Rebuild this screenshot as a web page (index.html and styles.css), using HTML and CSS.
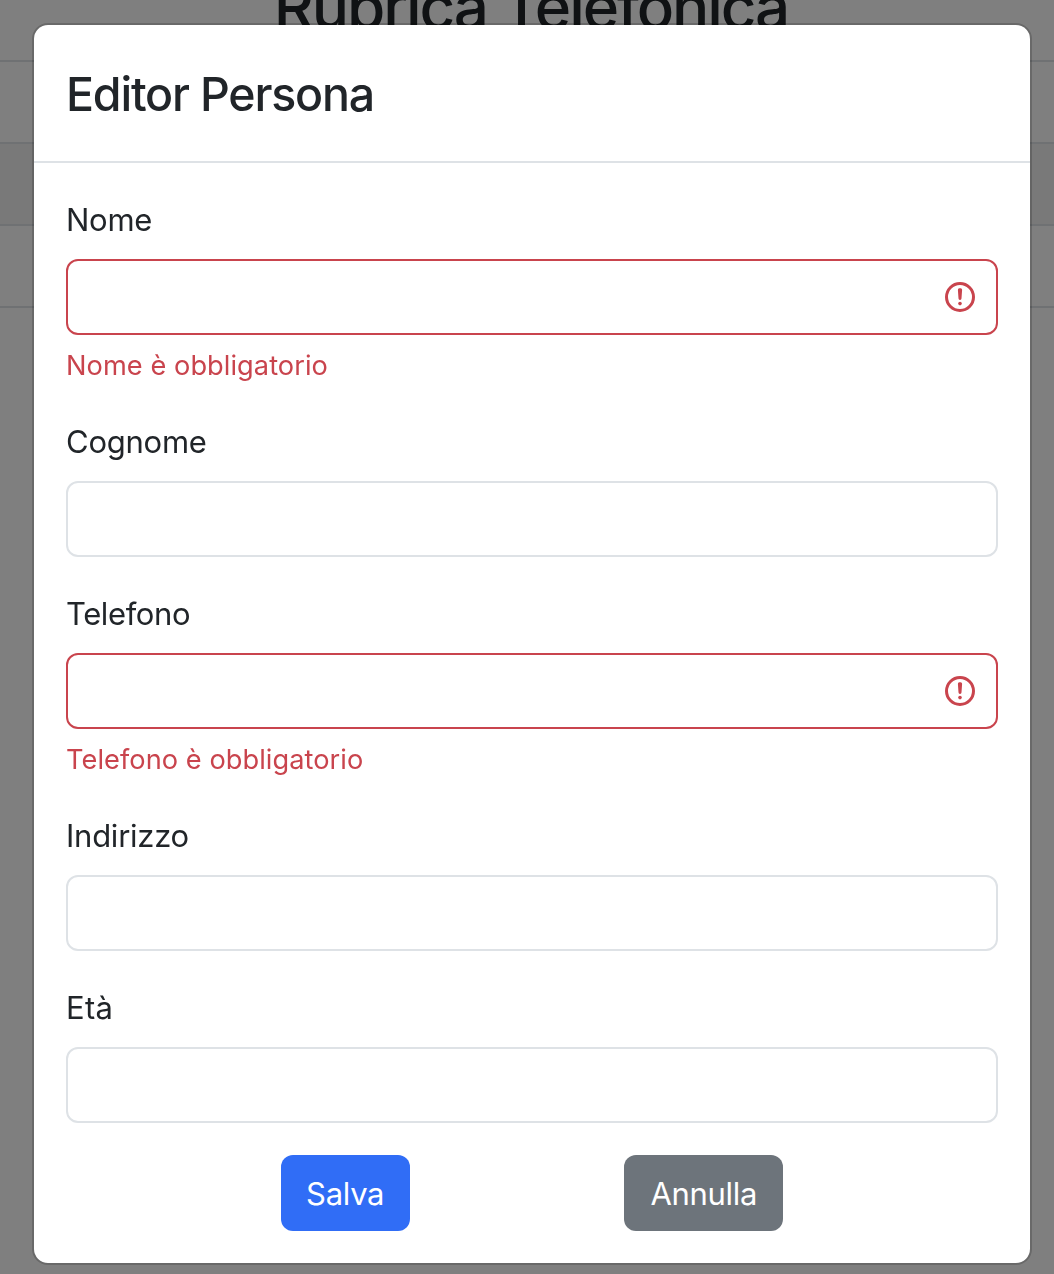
FILE: index.html
```html
<!DOCTYPE html>
<html lang="it">
<head>
<meta charset="utf-8">
<title>Rubrica Telefonica</title>
<link rel="stylesheet" href="styles.css">
</head>
<body>
<main class="page">
  <h1 class="page-title">Rubrica Telefonica</h1>
  <div class="table">
    <div class="table-row"></div>
    <div class="table-row table-row-striped"></div>
    <div class="table-row"></div>
  </div>
</main>
<div class="backdrop">
  <section class="modal" role="dialog" aria-labelledby="modal-title">
    <header class="modal-header">
      <h2 class="modal-title" id="modal-title">Editor Persona</h2>
    </header>
    <form class="modal-body">
      <div class="field">
        <label class="label" for="nome">Nome</label>
        <div class="control control-invalid">
          <input class="input" id="nome" type="text">
          <svg class="icon" viewBox="0 0 12 12" fill="none" stroke="currentColor"><circle cx="6" cy="6" r="4.5"/><path stroke-linejoin="round" d="M5.8 3.6h.4L6 6.5z"/><circle cx="6" cy="8.2" r=".6" fill="currentColor" stroke="none"/></svg>
        </div>
        <div class="feedback">Nome è obbligatorio</div>
      </div>
      <div class="field">
        <label class="label" for="cognome">Cognome</label>
        <div class="control"><input class="input" id="cognome" type="text"></div>
      </div>
      <div class="field">
        <label class="label label-tight" for="telefono">Telefono</label>
        <div class="control control-invalid">
          <input class="input" id="telefono" type="text">
          <svg class="icon" viewBox="0 0 12 12" fill="none" stroke="currentColor"><circle cx="6" cy="6" r="4.5"/><path stroke-linejoin="round" d="M5.8 3.6h.4L6 6.5z"/><circle cx="6" cy="8.2" r=".6" fill="currentColor" stroke="none"/></svg>
        </div>
        <div class="feedback">Telefono è obbligatorio</div>
      </div>
      <div class="field">
        <label class="label" for="indirizzo">Indirizzo</label>
        <div class="control"><input class="input" id="indirizzo" type="text"></div>
      </div>
      <div class="field">
        <label class="label label-wide" for="eta">Età</label>
        <div class="control"><input class="input" id="eta" type="text"></div>
      </div>
      <div class="actions">
        <button class="button button-primary" type="button">Salva</button>
        <button class="button button-secondary" type="button">Annulla</button>
      </div>
    </form>
  </section>
</div>
</body>
</html>
```

FILE: styles.css
```css
* {
  box-sizing: border-box;
}

body {
  margin: 0;
  height: 1274px;
  overflow: hidden;
  font-family: Inter, "Liberation Sans", sans-serif;
  font-size: 31px;
  line-height: 1.5;
  color: #212529;
  background: #fff;
}

.page {
  display: flow-root;
}

.page-title {
  margin: -32px 0 15px;
  padding-left: 8px;
  font-size: 62px;
  font-weight: 500;
  line-height: 77px;
  letter-spacing: -2.1px;
  text-align: center;
}

.table {
  border-top: 2px solid #dee2e6;
}

.table-row {
  height: 82px;
  border-bottom: 2px solid #dee2e6;
}

.table-row-striped {
  background: #f2f2f2;
}

.backdrop {
  position: fixed;
  inset: 0;
  padding: 23px 22px 9px 32px;
  background: rgba(0, 0, 0, 0.5);
}

.modal {
  width: 1000px;
  height: 1242px;
  border: 2px solid rgba(0, 0, 0, 0.175);
  border-radius: 16px;
  background: #fff;
  background-clip: padding-box;
}

.modal-header {
  display: flex;
  align-items: center;
  height: 138px;
  padding: 2px 32px 0;
  border-bottom: 2px solid #dee2e6;
}

.modal-title {
  margin: 0;
  font-size: 46.5px;
  font-weight: 500;
  line-height: 72px;
  letter-spacing: -1.2px;
}

.modal-body {
  display: flex;
  flex-direction: column;
  gap: 32px;
  padding: 32px;
}

.label {
  display: block;
  height: 48px;
  margin-bottom: 16px;
  padding-top: 2px;
  letter-spacing: -0.25px;
}

.label-tight {
  letter-spacing: -0.4px;
}

.label-wide {
  letter-spacing: 0.3px;
}

.control {
  display: flex;
  align-items: center;
  height: 76px;
  padding-right: 18px;
  border: 2px solid #dee2e6;
  border-radius: 12px;
  background: #fff;
}

.control-invalid {
  border-color: #c9444d;
}

.input {
  flex: 1;
  min-width: 0;
  height: 100%;
  padding: 12px 24px;
  border: 0;
  outline: 0;
  font: inherit;
  color: inherit;
  background: transparent;
}

.icon {
  width: 36px;
  height: 36px;
  color: #c9444d;
}

.feedback {
  height: 42px;
  margin-top: 8px;
  padding-top: 2px;
  font-size: 27.2px;
  line-height: 42px;
  letter-spacing: 0.06px;
  color: #c9444d;
}

.actions {
  display: flex;
  justify-content: space-evenly;
}

.button {
  height: 76px;
  padding: 3px 0 0;
  border: 0;
  border-radius: 12px;
  font: inherit;
  letter-spacing: -0.3px;
  color: #fff;
}

.button-primary {
  width: 129px;
  background: #306df6;
}

.button-secondary {
  width: 159px;
  background: #6d747b;
}
```
